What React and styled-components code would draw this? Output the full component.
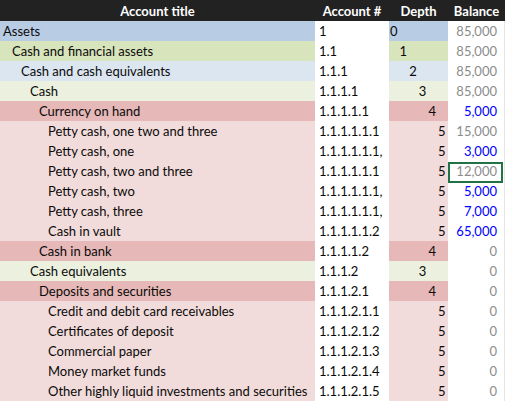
import React from "react";
import styled, { createGlobalStyle } from "styled-components";

const GlobalStyle = createGlobalStyle`
  html, body {
    margin: 0;
    padding: 0;
    background: #fff;
  }
  body {
    font-family: Lato, "Liberation Sans", sans-serif;
    font-size: 13px;
    color: #0a0a0a;
  }
`;

const levelColors = ["#b8cce4", "#d8e4bc", "#dce6f1", "#ebf1de", "#e6b8b7", "#f2dcdb"];

const Sheet = styled.div`
  width: 505px;
  display: grid;
  grid-template-columns: 315px 74px 59px 57px;
`;

const HeadCell = styled.div`
  height: 21px;
  line-height: 22px;
  background-color: #222;
  color: #fff;
  font-weight: bold;
  text-align: center;
  white-space: nowrap;
`;

const Cell = styled.div`
  position: relative;
  height: 20px;
  line-height: 21px;
  white-space: nowrap;
  overflow: hidden;
  box-sizing: border-box;
`;

const TitleCell = styled(Cell)`
  background-color: ${(p) => levelColors[p.$depth]};
  padding-left: ${(p) => 3 + p.$depth * 9}px;
`;

const AccountCell = styled(Cell)`
  background-color: #fff;
  padding-left: 4px;
`;

const DepthCell = styled(Cell)`
  background-color: ${(p) => levelColors[p.$depth]};
  padding-left: ${(p) => 1 + p.$depth * 9.6}px;
`;

const BalanceCell = styled(Cell)`
  overflow: visible;
  z-index: ${(p) => (p.$selected ? 2 : "auto")};
  background-color: #fff;
  text-align: right;
  padding-right: 7px;
  color: ${(p) => (p.$input ? "#0000ff" : "#8c8c8c")};
  border-right: 1px solid #e4e4e4;
`;

const Selection = styled.div`
  position: absolute;
  left: 0;
  right: 1px;
  top: 1px;
  bottom: -2px;
  border: 2px solid #217346;
  pointer-events: none;
`;

const rows = [
  [0, "Assets", "1", "85,000", false],
  [1, "Cash and financial assets", "1.1", "85,000", false],
  [2, "Cash and cash equivalents", "1.1.1", "85,000", false],
  [3, "Cash", "1.1.1.1", "85,000", false],
  [4, "Currency on hand", "1.1.1.1.1", "5,000", true],
  [5, "Petty cash, one two and three", "1.1.1.1.1.1", "15,000", false],
  [5, "Petty cash, one", "1.1.1.1.1.1,", "3,000", true],
  [5, "Petty cash, two and three", "1.1.1.1.1.1", "12,000", false, true],
  [5, "Petty cash, two", "1.1.1.1.1.1,", "5,000", true],
  [5, "Petty cash, three", "1.1.1.1.1.1,", "7,000", true],
  [5, "Cash in vault", "1.1.1.1.1.2", "65,000", true],
  [4, "Cash in bank", "1.1.1.1.2", "0", false],
  [3, "Cash equivalents", "1.1.1.2", "0", false],
  [4, "Deposits and securities", "1.1.1.2.1", "0", false],
  [5, "Credit and debit card receivables", "1.1.1.2.1.1", "0", false],
  [5, "Certificates of deposit", "1.1.1.2.1.2", "0", false],
  [5, "Commercial paper", "1.1.1.2.1.3", "0", false],
  [5, "Money market funds", "1.1.1.2.1.4", "0", false],
  [5, "Other highly liquid investments and securities", "1.1.1.2.1.5", "0", false],
];

const App = () => {
  return (
    <>
      <GlobalStyle />
      <Sheet>
        <HeadCell>Account title</HeadCell>
        <HeadCell>Account #</HeadCell>
        <HeadCell>Depth</HeadCell>
        <HeadCell>Balance</HeadCell>

        {rows.map(([depth, title, account, balance, input, selected], i) => (
          <React.Fragment key={i}>
            <TitleCell $depth={depth}>{title}</TitleCell>
            <AccountCell>{account}</AccountCell>
            <DepthCell $depth={depth}>{depth}</DepthCell>
            <BalanceCell $input={input} $selected={selected}>
              {balance}
              {selected && <Selection />}
            </BalanceCell>
          </React.Fragment>
        ))}
      </Sheet>
    </>
  );
};

export default App;
